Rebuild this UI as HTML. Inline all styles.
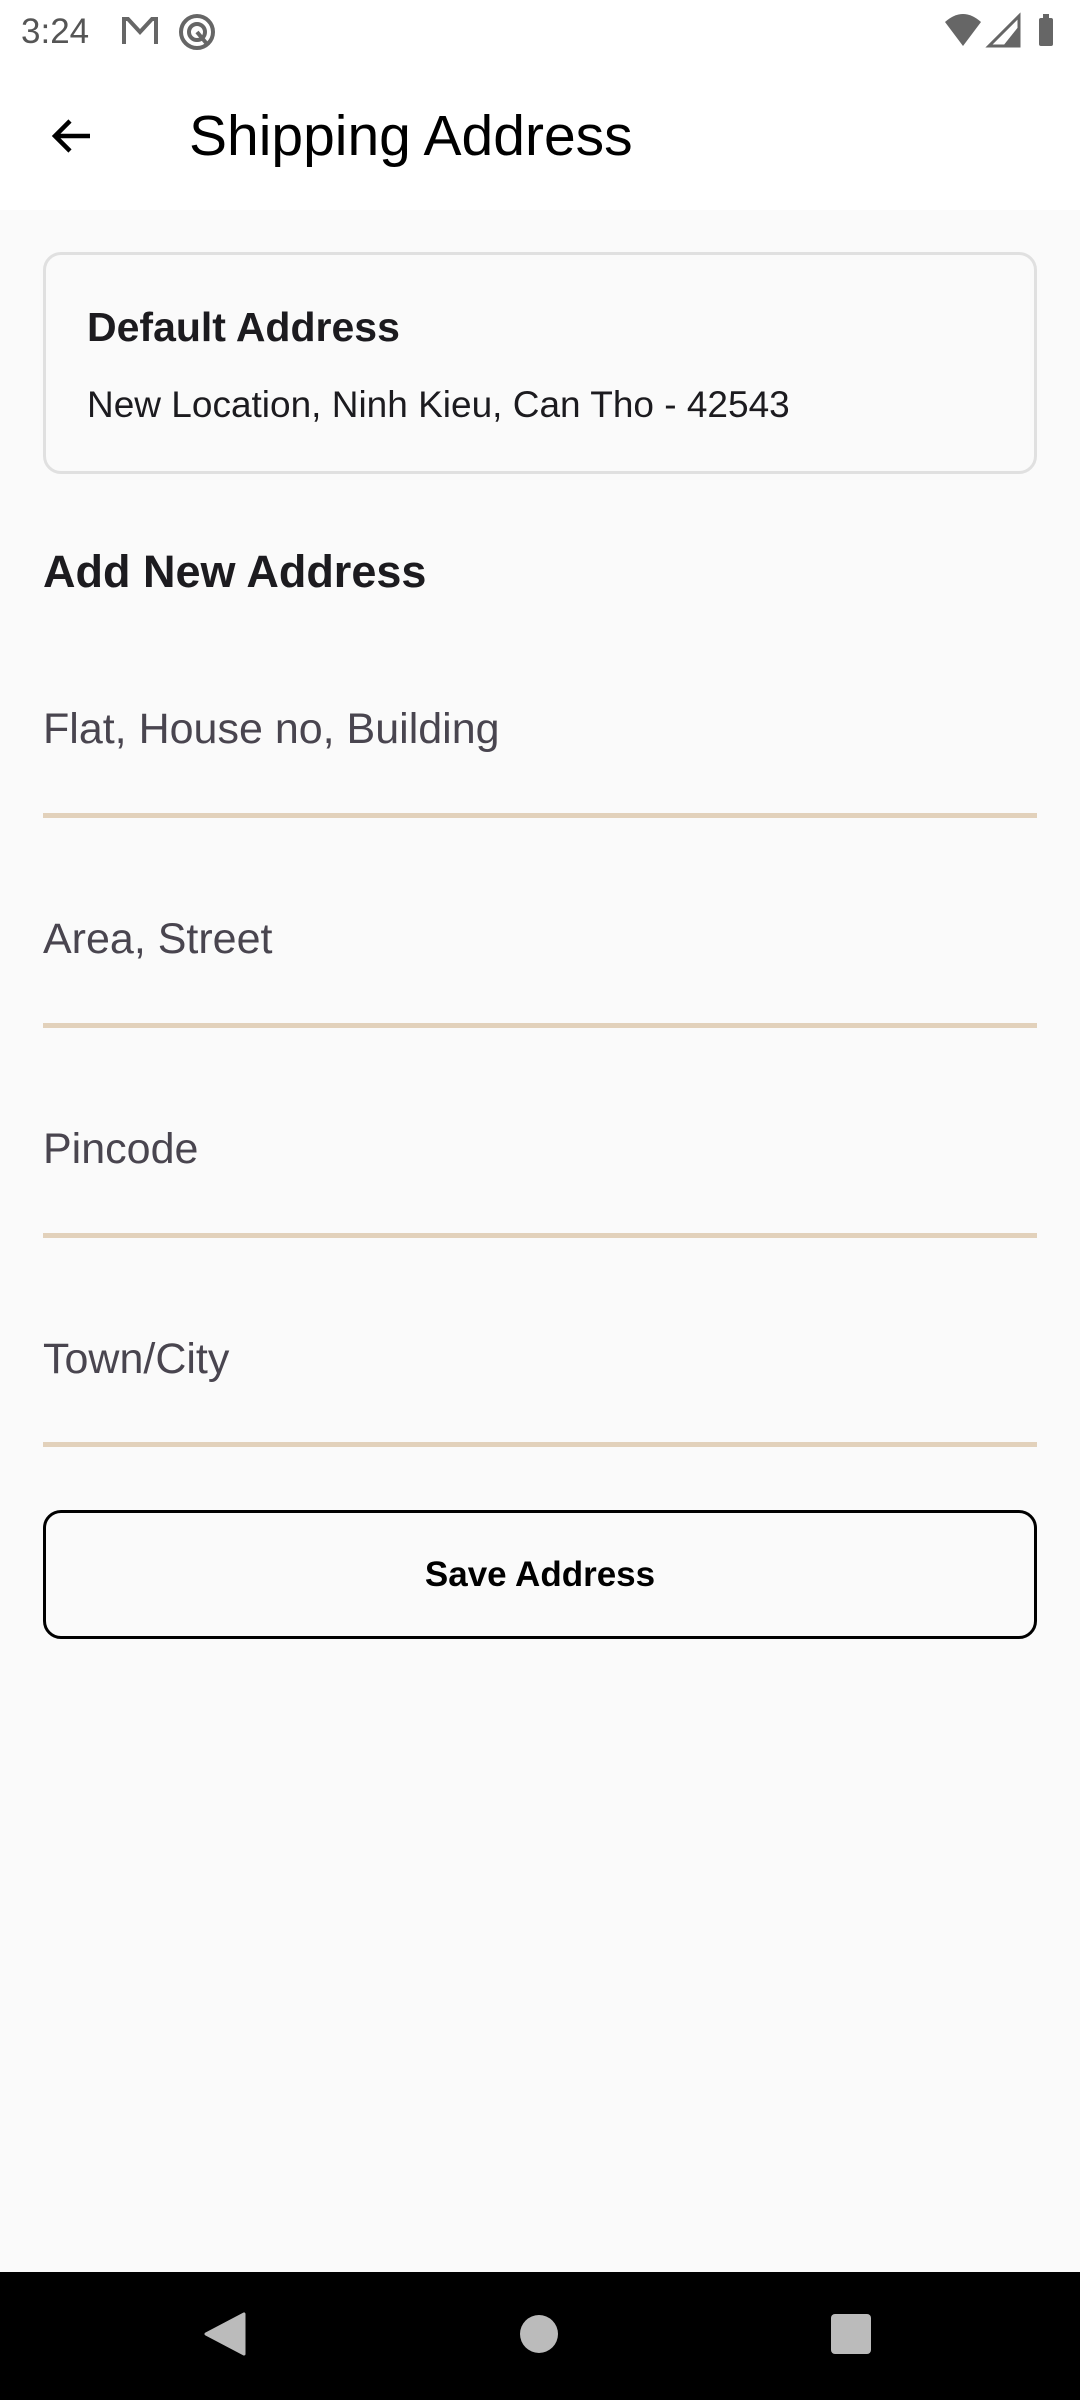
<!DOCTYPE html>
<html><head><meta charset="utf-8"><style>
*{margin:0;padding:0;box-sizing:border-box}
body{width:1080px;height:2400px;background:#fafafa;font-family:"Liberation Sans",sans-serif;position:relative;overflow:hidden;color:#1c1b1f}
.abs{position:absolute}
.hdr{left:0;top:0;width:1080px;height:210px;background:#fff}
.lbl{left:43px;font-size:43px;color:#49454f;line-height:1}
.line{left:43px;width:994px;height:5px;background:#e2d1bb}
</style></head><body>
<div class="abs hdr"></div>
<div class="abs" style="left:21px;top:12px;font-size:35px;color:#555;">3:24</div>
<svg class="abs" style="left:120px;top:14px" width="40" height="34" viewBox="0 0 40 34"><path d="M4 30V5h4l12 13L32 5h4v25" fill="none" stroke="#666" stroke-width="4"/></svg>
<svg class="abs" style="left:177px;top:12px" width="40" height="40" viewBox="0 0 40 40"><circle cx="20" cy="20" r="16" fill="none" stroke="#666" stroke-width="4"/><circle cx="20" cy="20" r="8" fill="none" stroke="#666" stroke-width="4"/><path d="M20 20l10 12" stroke="#666" stroke-width="4"/></svg>
<svg class="abs" style="left:945px;top:12px" width="120" height="38" viewBox="0 0 120 38"><path d="M0 10Q18-6 36 10L18 34Z" fill="#666"/><path d="M74 4V34H44Z" fill="none" stroke="#666" stroke-width="3"/><path d="M74 14V34H58Z" fill="#666"/><rect x="94" y="6" width="14" height="28" rx="2" fill="#666"/><rect x="98" y="2" width="6" height="5" fill="#666"/></svg>
<svg class="abs" style="left:48px;top:112px" width="48" height="48" viewBox="0 0 48 48"><path d="M42 24H8M22 9L7 24l15 15" fill="none" stroke="#000" stroke-width="4.5"/></svg>
<div class="abs" style="left:189px;top:103px;font-size:57px;color:#000;">Shipping Address</div>
<div class="abs" style="left:43px;top:252px;width:994px;height:222px;border:3px solid #e0e0e0;border-radius:18px;"></div>
<div class="abs" style="left:87px;top:304px;font-size:41px;font-weight:bold;">Default Address</div>
<div class="abs" style="left:87px;top:384px;font-size:37px;">New Location, Ninh Kieu, Can Tho - 42543</div>
<div class="abs" style="left:43px;top:546px;font-size:45px;font-weight:bold;">Add New Address</div>
<div class="abs lbl" style="top:708px">Flat, House no, Building</div>
<div class="abs line" style="top:813px"></div>
<div class="abs lbl" style="top:918px">Area, Street</div>
<div class="abs line" style="top:1023px"></div>
<div class="abs lbl" style="top:1128px">Pincode</div>
<div class="abs line" style="top:1233px"></div>
<div class="abs lbl" style="top:1338px">Town/City</div>
<div class="abs line" style="top:1442px"></div>
<div class="abs" style="left:43px;top:1510px;width:994px;height:129px;border:3px solid #000;border-radius:18px;display:flex;align-items:center;justify-content:center;font-size:35px;font-weight:bold;color:#000;">Save Address</div>
<div class="abs" style="left:0;top:2272px;width:1080px;height:128px;background:#000"></div>
<svg class="abs" style="left:200px;top:2310px" width="48" height="48" viewBox="0 0 48 48"><path d="M44 4V44L6 24Z" fill="#bbb" stroke="#bbb" stroke-width="3" stroke-linejoin="round"/></svg>
<div class="abs" style="left:520px;top:2315px;width:38px;height:38px;border-radius:50%;background:#bbb"></div>
<div class="abs" style="left:831px;top:2314px;width:40px;height:40px;border-radius:4px;background:#bbb"></div>
</body></html>
